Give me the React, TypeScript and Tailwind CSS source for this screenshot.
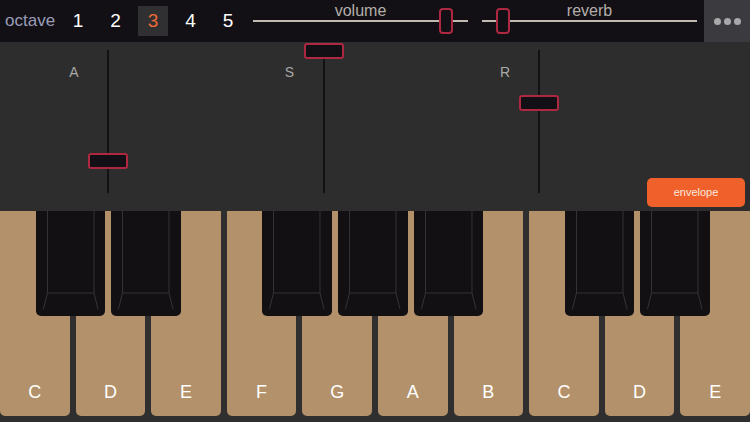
import React from "react";

const font = { fontFamily: '"Liberation Sans", Arial, sans-serif' };

const whiteKeys = ["C", "D", "E", "F", "G", "A", "B", "C", "D", "E"];
// slot per gap between white keys; false = no black key there
const blackSlots = [true, true, false, true, true, true, false, true, true];

function TopSlider({ label, pos }: { label: string; pos: number }) {
  return (
    <div className="relative h-[42px] w-[215px] shrink-0">
      <div className="absolute inset-x-0 top-[2px] text-center text-[16px] leading-[18px] text-[#b4aeaa]">
        {label}
      </div>
      <div className="absolute inset-x-0 top-[20px] h-[2px] bg-[#c2bab2]" />
      <div
        className="absolute top-[8px] h-[26px] w-[14px] rounded-[4px] border-2 border-[#ad2840] bg-[#121014]"
        style={{ left: pos }}
      />
    </div>
  );
}

function EnvSlider({ label, thumbTop }: { label: string; thumbTop: number }) {
  return (
    <div className="flex h-full w-[68px] shrink-0">
      <div className="w-[28px] pt-[22px] text-center text-[14px] leading-[16px] text-[#a9a9a9]">
        {label}
      </div>
      <div className="relative h-full w-[40px]">
        <div className="absolute left-[19px] top-[8px] h-[143px] w-[2px] bg-[#121212]" />
        <div
          className="absolute left-0 h-[16px] w-[40px] rounded-[3px] border-2 border-[#ad2840] bg-[#121014]"
          style={{ top: thumbTop }}
        />
      </div>
    </div>
  );
}

function BlackKey() {
  return (
    <div className="h-[105px] w-[69.6px] shrink-0 rounded-b-[5px] bg-[#121013]">
      <svg width="69.6" height="105" viewBox="0 0 69.6 105" className="block">
        <g stroke="#343335" strokeWidth="1" fill="none">
          <path d="M11.5 0 V82 L7.5 98" />
          <path d="M58 0 V82 L62 98" />
          <path d="M11.5 82 H58" />
        </g>
      </svg>
    </div>
  );
}

export default function App() {
  return (
    <div className="flex h-[422px] w-[750px] flex-col overflow-hidden bg-[#2d2d2d]" style={font}>
      {/* top bar */}
      <div className="flex h-[42px] items-center bg-[#121014]">
        <div className="w-[58px] shrink-0 pl-[5px] text-[17px] text-[#9b9db9]">octave</div>
        <div className="ml-[5px] flex shrink-0 gap-[7.5px]">
          {[1, 2, 3, 4, 5].map((n) => (
            <div
              key={n}
              className={
                n === 3
                  ? "flex h-[30px] w-[30px] items-center justify-center bg-[#303032] text-[19px] text-[#ee6a34]"
                  : "flex h-[30px] w-[30px] items-center justify-center text-[19px] text-white"
              }
            >
              {n}
            </div>
          ))}
        </div>
        <div className="ml-[10px] flex shrink-0 gap-[14px]">
          <TopSlider label="volume" pos={186} />
          <TopSlider label="reverb" pos={14} />
        </div>
        <div className="ml-auto flex h-[42px] w-[46px] shrink-0 items-center justify-center gap-[3px] bg-[#3a3a3f]">
          <span className="h-[7px] w-[7px] rounded-full bg-[#a9a9ab]" />
          <span className="h-[7px] w-[7px] rounded-full bg-[#a9a9ab]" />
          <span className="h-[7px] w-[7px] rounded-full bg-[#a9a9ab]" />
        </div>
      </div>

      {/* envelope panel */}
      <div className="flex h-[169px] bg-[#2d2d2d] pl-[60px]">
        <div className="flex gap-[147.5px]">
          <EnvSlider label="A" thumbTop={111} />
          <EnvSlider label="S" thumbTop={1} />
          <EnvSlider label="R" thumbTop={53} />
        </div>
        <div className="ml-auto mb-[4px] mr-[5px] flex self-end">
          <button className="h-[29px] w-[98px] rounded-[5px] bg-[#ef602b] text-[11px] text-[#fde9df]">
            envelope
          </button>
        </div>
      </div>

      {/* keyboard */}
      <div className="relative h-[211px] bg-[#2f2f2f] pb-[6px]">
        <div className="flex h-full gap-[6px]">
          {whiteKeys.map((k, i) => (
            <div
              key={i}
              className="flex flex-1 items-end justify-center rounded-b-[5px] bg-[#b3916a] pb-[10px] text-[18px] text-white"
            >
              {k}
            </div>
          ))}
        </div>
        <div className="absolute left-[35.7px] top-0 flex gap-[6px]">
          {blackSlots.map((b, i) =>
            b ? <BlackKey key={i} /> : <div key={i} className="w-[69.6px] shrink-0" />
          )}
        </div>
      </div>
    </div>
  );
}
